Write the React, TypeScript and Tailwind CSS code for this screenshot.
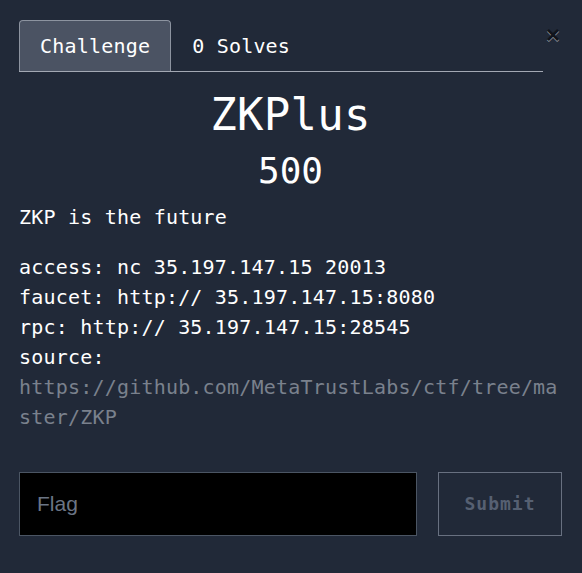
import { useState } from "react";

const App = () => {
    const [flag, setFlag] = useState("");

    return (
        <main className="min-h-screen w-full bg-[#212938] pl-[19px] pr-[20px] pt-5 font-['DejaVu_Sans_Mono',monospace] text-white">
            <header className="flex items-start">
                <nav className="flex flex-1 border-b border-[#a3a8b3]">
                    <button className="rounded-t-[4px] border border-b-0 border-[#8d94a0] bg-[#4b5363] px-5 py-[10px] text-[20px] leading-[30px] tracking-[0.2px] text-white">
                        Challenge
                    </button>
                    <button className="border border-b-0 border-transparent px-5 py-[10px] text-[20px] leading-[30px] tracking-[0.2px] text-white">
                        0 Solves
                    </button>
                </nav>
                <button
                    aria-label="Close"
                    className="mt-[3px] w-[19px] pl-[3px] text-left font-['Liberation_Sans',sans-serif] text-[24px] font-bold leading-none text-black opacity-50 [text-shadow:0_1px_0_#fff]"
                >
                    ×
                </button>
            </header>

            <h1 className="mt-[17px] text-center text-[44px] leading-[1.2] tracking-[0.3px]">ZKPlus</h1>
            <h2 className="mt-[7px] text-center text-[36px] leading-[1.2]">500</h2>

            <section className="text-[20px] leading-[30px] tracking-[0.2px]">
                <p className="mt-[10px]">ZKP is the future</p>
                <p className="mt-[20px]">
                    access: nc 35.197.147.15 20013
                    <br />
                    faucet: http:// 35.197.147.15:8080
                    <br />
                    rpc: http:// 35.197.147.15:28545
                    <br />
                    source:
                    <br />
                    <a className="break-all text-[#7a818d]">
                        https://github.com/MetaTrustLabs/ctf/tree/master/ZKP
                    </a>
                </p>
            </section>

            <form
                className="mt-[40px] flex gap-[21px]"
                onSubmit={(e) => e.preventDefault()}
            >
                <input
                    className="h-16 w-[398px] border border-[#4b5563] bg-black px-[17px] font-['Liberation_Sans',sans-serif] text-[21px] text-white outline-none placeholder:text-[#6b7585]"
                    placeholder="Flag"
                    value={flag}
                    onChange={(e) => setFlag(e.target.value)}
                />
                <button
                    type="submit"
                    className="h-16 flex-1 border border-[#687080] text-[18px] font-bold tracking-[1px] text-[#566072]"
                >
                    Submit
                </button>
            </form>
        </main>
    );
};

export default App;
